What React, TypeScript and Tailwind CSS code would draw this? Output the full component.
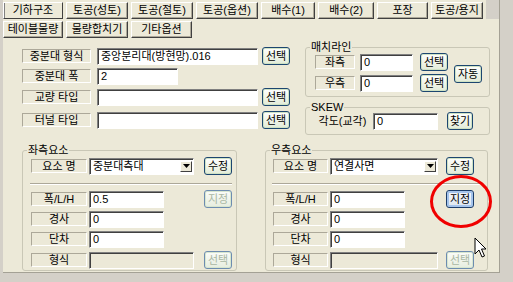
import React from 'react';

function Tab({ label, w, active }: { label: string; w: string; active?: boolean }) {
  return (
    <div
      className={`${w} h-[17px] flex items-center justify-center bg-[#ece9d8] border-t border-l border-white border-r border-b border-r-[#404040] border-b-[#404040] ${
        active ? 'shadow-[inset_1px_0_0_#808080]' : 'shadow-[inset_-1px_-1px_0_#aca899]'
      } leading-none`}
    >
      {label}
    </div>
  );
}

function Label({ text, w, flat }: { text: string; w: string; flat?: boolean }) {
  return (
    <div
      className={`${w} h-[14px] flex items-center justify-center leading-none ${
        flat ? '' : 'border border-t-[#aca899] border-l-[#aca899] border-b-white border-r-white'
      }`}
    >
      {text}
    </div>
  );
}

function Field({ value = '', w, disabled }: { value?: string; w: string; disabled?: boolean }) {
  return (
    <div
      className={`${w} h-[17px] flex items-center pl-[3px] leading-none border border-t-[#808080] border-l-[#808080] border-b-white border-r-white shadow-[inset_1px_1px_0_#404040] ${
        disabled ? 'bg-[#ece9d8]' : 'bg-white'
      }`}
    >
      {value}
    </div>
  );
}

function Combo({ value, w }: { value: string; w: string }) {
  return (
    <div className={`${w} h-[17px] flex bg-white border border-t-[#808080] border-l-[#808080] border-b-white border-r-white shadow-[inset_1px_1px_0_#404040]`}>
      <div className="flex-1 flex items-center pl-[3px] leading-none">{value}</div>
      <div className="w-[12px] my-[2px] mr-[1px] bg-[#ece9d8] border border-t-white border-l-white border-r-[#404040] border-b-[#404040] flex items-center justify-center">
        <svg width="7" height="4" viewBox="0 0 7 4">
          <polygon points="0,0 7,0 3.5,4" fill="#000" />
        </svg>
      </div>
    </div>
  );
}

function Btn({
  text,
  w = 'w-[28px]',
  disabled,
  focused,
}: {
  text: string;
  w?: string;
  disabled?: boolean;
  focused?: boolean;
}) {
  let look =
    'border-[#1c4670] bg-linear-to-b from-white to-[#e2ebd8] shadow-[inset_0_0_0_1px_#cfe2c4] text-black';
  if (disabled)
    look =
      'border-[#6d8cb0] bg-linear-to-b from-[#fbfcf9] to-[#e6eddf] shadow-[inset_0_0_0_1px_#d7e6cf] text-[#a9b7a3]';
  if (focused)
    look =
      'border-[#1b3d6a] bg-linear-to-b from-[#f4f8fd] to-[#dde6ef] shadow-[inset_0_0_0_2px_#a5c4ec] text-black';
  return (
    <div className={`${w} h-[18px] flex items-center justify-center rounded-[3px] border leading-none ${look}`}>
      {text}
    </div>
  );
}

function Group({
  title,
  className,
  children,
}: {
  title: string;
  className: string;
  children: React.ReactNode;
}) {
  return (
    <div className={`relative border border-[#c9c7b6] rounded-[3px] ${className}`}>
      <span className="absolute -top-[8px] left-[4px] bg-[#ece9d8] px-[1px] leading-[14px]">{title}</span>
      {children}
    </div>
  );
}

function ElementGroup({
  title,
  name,
  width,
  value,
  active,
  labelW,
  midW,
  pad,
  btnGap,
}: {
  title: string;
  name: string;
  width: string;
  value: string;
  active?: boolean;
  labelW: string;
  midW: string;
  pad: string;
  btnGap: string;
}) {
  return (
    <Group title={title} className={`${width} h-[121px]`}>
      <div className={`flex flex-col pt-[6px] ${pad}`}>
        <div className="flex items-center h-[18px]">
          <Label text="요소 명" w={labelW} />
          <div className={`${midW} ml-[2px]`}>
            <Combo value={name} w="w-full" />
          </div>
          <div className={btnGap}>
            <Btn text="수정" />
          </div>
        </div>
        <div className="mt-[8px] mr-[4px] -ml-[1px] h-[2px] border-t border-[#aca899] border-b border-b-white" />
        <div className="flex items-center h-[18px] mt-[5px]">
          <Label text="폭/L/H" w={labelW} />
          <div className={`${midW} ml-[2px]`}>
            <Field value={value} w="w-[75px]" />
          </div>
          <div className={btnGap}>
            <Btn text="지정" disabled={!active} focused={active} />
          </div>
        </div>
        <div className="flex items-center h-[18px] mt-[2px]">
          <Label text="경사" w={labelW} />
          <div className={`${midW} ml-[2px]`}>
            <Field value="0" w="w-[75px]" />
          </div>
        </div>
        <div className="flex items-center h-[18px] mt-[2px]">
          <Label text="단차" w={labelW} />
          <div className={`${midW} ml-[2px]`}>
            <Field value="0" w="w-[75px]" />
          </div>
        </div>
        <div className="flex items-center h-[18px] mt-[3px]">
          <Label text="형식" w={labelW} />
          <div className={`${midW} ml-[2px]`}>
            <Field w="w-full" disabled />
          </div>
          <div className={btnGap}>
            <Btn text="선택" disabled />
          </div>
        </div>
      </div>
    </Group>
  );
}

export default function App() {
  return (
    <div className="w-[513px] h-[282px] bg-[#d4d0c8] relative overflow-hidden text-black text-[11px] font-['Liberation_Sans','Noto_Sans_CJK_KR',sans-serif]">
      <div className="ml-[3px] w-[497px] h-[273px] bg-[#ece9d8] border-r border-b border-[#a4a195] flex flex-col">
        {/* tab rows */}
        <div className="flex items-end h-[19px] gap-[3px]">
          <Tab label="기하구조" w="w-[60px]" active />
          <Tab label="토공(성토)" w="w-[62px]" />
          <Tab label="토공(절토)" w="w-[62px]" />
          <Tab label="토공(옵션)" w="w-[62px]" />
          <Tab label="배수(1)" w="w-[54px]" />
          <Tab label="배수(2)" w="w-[56px]" />
          <Tab label="포장" w="w-[51px]" />
          <Tab label="토공/용지" w="w-[52px]" />
          <div className="flex-1 h-full bg-[#d4d0c8]" />
        </div>
        <div className="flex gap-[3px] mt-[2px]">
          <Tab label="테이블물량" w="w-[60px]" />
          <Tab label="물량합치기" w="w-[62px]" />
          <Tab label="기타옵션" w="w-[61px]" />
        </div>

        {/* upper section */}
        <div className="flex mt-[9px] pl-[19px]">
          <div className="flex flex-col w-[268px]">
            <div className="flex items-center h-[18px]">
              <Label text="중분대 형식" w="w-[69px]" />
              <div className="ml-[6px]">
                <Field value="중앙분리대(방현망).016" w="w-[161px]" />
              </div>
              <div className="ml-[4px]">
                <Btn text="선택" />
              </div>
            </div>
            <div className="flex items-center h-[18px] mt-[2px]">
              <Label text="중분대 폭" w="w-[69px]" />
              <div className="ml-[6px]">
                <Field value="2" w="w-[81px]" />
              </div>
            </div>
            <div className="flex items-center h-[18px] mt-[3px]">
              <Label text="교량 타입" w="w-[69px]" />
              <div className="ml-[6px]">
                <Field w="w-[161px]" />
              </div>
              <div className="ml-[4px]">
                <Btn text="선택" />
              </div>
            </div>
            <div className="flex items-center h-[18px] mt-[5px]">
              <Label text="터널 타입" w="w-[69px]" />
              <div className="ml-[6px]">
                <Field w="w-[161px]" />
              </div>
              <div className="ml-[4px]">
                <Btn text="선택" />
              </div>
            </div>
          </div>

          <div className="flex flex-col ml-[15px] w-[185px]">
            <Group title="매치라인" className="h-[50px]">
              <div className="flex items-center pt-[5px] pl-[9px]">
                <div className="flex flex-col gap-[3px]">
                  <div className="flex items-center h-[18px]">
                    <Label text="좌측" w="w-[40px]" />
                    <div className="ml-[5px]">
                      <Field value="0" w="w-[53px]" />
                    </div>
                    <div className="ml-[7px]">
                      <Btn text="선택" />
                    </div>
                  </div>
                  <div className="flex items-center h-[18px]">
                    <Label text="우측" w="w-[40px]" />
                    <div className="ml-[5px]">
                      <Field value="0" w="w-[53px]" />
                    </div>
                    <div className="ml-[7px]">
                      <Btn text="선택" />
                    </div>
                  </div>
                </div>
                <div className="ml-[6px] mt-[3px]">
                  <Btn text="자동" />
                </div>
              </div>
            </Group>
            <Group title="SKEW" className="h-[28px] mt-[10px]">
              <div className="flex items-center h-full pl-[9px]">
                <Label text="각도(교각)" w="w-[55px]" flat />
                <div className="ml-[3px]">
                  <Field value="0" w="w-[65px]" />
                </div>
                <div className="ml-[9px]">
                  <Btn text="찾기" w="w-[26px]" />
                </div>
              </div>
            </Group>
          </div>
        </div>

        {/* lower section */}
        <div className="flex mt-[15px] pl-[19px]">
          <ElementGroup
            title="좌측요소"
            name="중분대측대"
            width="w-[215px]"
            value="0.5"
            labelW="w-[56px]"
            midW="w-[105px]"
            pad="pl-[8px]"
            btnGap="ml-[10px]"
          />
          <div className="ml-[28px]">
            <ElementGroup
              title="우측요소"
              name="연결사면"
              width="w-[223px]"
              value="0"
              active
              labelW="w-[55px]"
              midW="w-[108px]"
              pad="pl-[7px]"
              btnGap="ml-[8px]"
            />
          </div>
        </div>
      </div>

      {/* annotation overlay */}
      <div className="absolute left-[430px] top-[175px] w-[62px] h-[53px] rounded-[50%] border-[3px] border-[#f00000]" />
      <svg className="absolute left-[474px] top-[237px]" width="13" height="21" viewBox="0 0 13 21">
        <path d="M1 1 L1 17 L5 13 L8 20 L10.5 19 L7.5 12 L12 12 Z" fill="#fff" stroke="#000" strokeWidth="1" strokeLinejoin="round" />
      </svg>
    </div>
  );
}
